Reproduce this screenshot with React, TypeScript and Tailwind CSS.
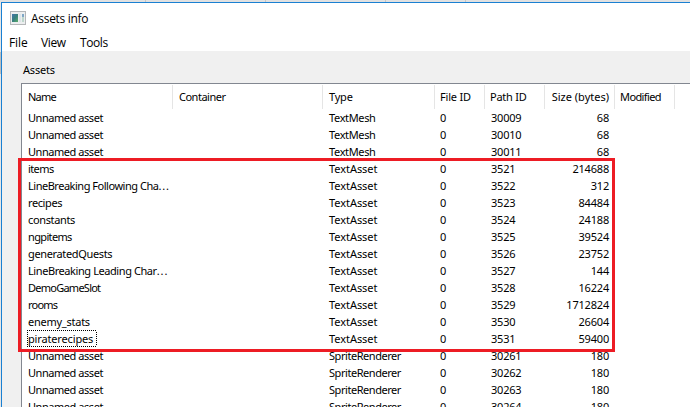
import React from "react";

type Asset = [name: string, type: string, pathId: string, size: string];

const assets: Asset[] = [
  ["Unnamed asset", "TextMesh", "30009", "68"],
  ["Unnamed asset", "TextMesh", "30010", "68"],
  ["Unnamed asset", "TextMesh", "30011", "68"],
  ["items", "TextAsset", "3521", "214688"],
  ["LineBreaking Following Cha...", "TextAsset", "3522", "312"],
  ["recipes", "TextAsset", "3523", "84484"],
  ["constants", "TextAsset", "3524", "24188"],
  ["ngpitems", "TextAsset", "3525", "39524"],
  ["generatedQuests", "TextAsset", "3526", "23752"],
  ["LineBreaking Leading Char...", "TextAsset", "3527", "144"],
  ["DemoGameSlot", "TextAsset", "3528", "16224"],
  ["rooms", "TextAsset", "3529", "1712824"],
  ["enemy_stats", "TextAsset", "3530", "26604"],
  ["piraterecipes", "TextAsset", "3531", "59400"],
  ["Unnamed asset", "SpriteRenderer", "30261", "180"],
  ["Unnamed asset", "SpriteRenderer", "30262", "180"],
  ["Unnamed asset", "SpriteRenderer", "30263", "180"],
  ["Unnamed asset", "SpriteRenderer", "30264", "180"],
];

const columns = "grid grid-cols-[151px_150px_112px_50px_60px_70px_60px]";

const nameTracking: Record<string, string> = {
  "Unnamed asset": "tracking-[-0.45px]",
  "LineBreaking Following Cha...": "tracking-[-0.48px]",
  "LineBreaking Leading Char...": "tracking-[-0.42px]",
  DemoGameSlot: "tracking-[-0.75px]",
  generatedQuests: "tracking-[-0.35px]",
  recipes: "tracking-[-0.4px]",
  rooms: "tracking-[-0.8px]",
  items: "tracking-[-0.6px]",
  ngpitems: "tracking-[-0.65px]",
  constants: "tracking-[-0.35px]",
  enemy_stats: "tracking-[-0.25px]",
};

const typeTracking: Record<string, string> = {
  TextMesh: "tracking-[-0.35px]",
  TextAsset: "tracking-[-0.05px]",
  SpriteRenderer: "tracking-[-0.45px]",
};

function WindowIcon() {
  return (
    <svg width="16" height="14" viewBox="0 0 16 14" shapeRendering="crispEdges">
      <defs>
        <linearGradient id="pane" x1="0" y1="0" x2="1" y2="1">
          <stop offset="0" stopColor="#4474ab" />
          <stop offset="0.5" stopColor="#37807e" />
          <stop offset="1" stopColor="#5cab68" />
        </linearGradient>
      </defs>
      <rect width="16" height="14" fill="#b4b6b8" />
      <rect x="1" y="1" width="14" height="12" fill="#eceeef" />
      <rect x="2" y="3" width="6" height="8" fill="url(#pane)" />
      <rect x="9" y="3" width="2" height="8" fill="#dce4e8" />
      <rect x="12" y="3" width="2" height="3" fill="#7fa6c6" />
      <rect x="12" y="6" width="2" height="5" fill="#bcd6cb" />
    </svg>
  );
}

function Row({ asset: [name, type, pathId, size] }: { asset: Asset }) {
  const focused = name === "piraterecipes";
  const truncated = name.endsWith("...");
  return (
    <div className={`${columns} h-[17px] leading-[17px]`}>
      <div className="flex pl-[6px]">
        <span className={`${focused ? "relative" : ""} ${nameTracking[name] ?? "tracking-[-0.15px]"}`}>
          {truncated ? name.slice(0, -3) : name}
          {truncated && <span className="tracking-[0.9px]">...</span>}
          {focused && (
            <svg className="absolute -left-px top-0" width="70" height="17" shapeRendering="crispEdges">
              <path d="M0 0.5H70M0 16.5H70M0.5 2V16M69.5 2V16" stroke="#000" strokeDasharray="1 1" />
            </svg>
          )}
        </span>
      </div>
      <div />
      <div className={`pl-[6px] ${typeTracking[type]}`}>{type}</div>
      <div className="pl-[5px]">0</div>
      <div className="pl-[6px]">{pathId}</div>
      <div className="pr-[6px] text-right">{size}</div>
      <div />
    </div>
  );
}

export default function App() {
  return (
    <div className="relative flex h-[407px] w-[690px] flex-col overflow-hidden bg-[#e1e1e1] font-['Noto_Sans',sans-serif] text-black">
      <div className="flex h-[2px] shrink-0">
        <div className="w-[146px] border-r border-[#c6c6c6]" />
        <div className="w-[120px] border-r border-[#c6c6c6]" />
        <div className="w-[120px] border-r border-[#c6c6c6]" />
        <div className="w-[80px] border-r border-[#c6c6c6]" />
      </div>
      <div className="flex min-h-0 flex-1">
        <div className="flex w-px shrink-0 flex-col">
          <div className="h-[50px] bg-[#e6e6e6]" />
          <div className="h-[22px] bg-[#bdbdbd]" />
          <div className="flex-1 bg-[#e6e6e6]" />
        </div>
        <div className="flex min-w-0 flex-1 flex-col border-l border-t border-[#1a80d2] bg-[#f0f0f0]">
          <header className="flex h-[32px] shrink-0 items-center bg-white pl-[8px]">
            <div className="pb-[3px]">
              <WindowIcon />
            </div>
            <h1 className="ml-[5px] whitespace-nowrap pb-px font-['Open_Sans',sans-serif] text-[12px] tracking-[-0.3px]">Assets info</h1>
          </header>
          <nav className="flex h-[16px] shrink-0 items-center bg-white pl-[7px] font-['Open_Sans',sans-serif] text-[12px] leading-[16px]">
            <span className="w-[32px] tracking-[-0.1px]">File</span>
            <span className="w-[39px] tracking-[-0.4px]">View</span>
            <span className="tracking-[-0.4px]">Tools</span>
          </nav>
          <main className="flex min-h-0 flex-1 flex-col pl-[19px] text-[11px] tracking-[-0.2px]">
            <div className="h-[32px] shrink-0 pl-[2px] pt-[11px] leading-[16px]">Assets</div>
            <div className="min-h-0 flex-1 overflow-hidden border-l border-t border-[#828790] bg-white">
              <div className={`${columns} mt-px h-[24px] leading-[24px] *:h-[24px] *:border-r *:border-[#e5e5e5] *:whitespace-nowrap`}>
                <div className="pl-[6px] tracking-[-0.8px]">Name</div>
                <div className="pl-[6px] tracking-[-0.5px]">Container</div>
                <div className="pl-[6px]">Type</div>
                <div className="pl-[5px]">File ID</div>
                <div className="pl-[5px] tracking-[-0.25px]">Path ID</div>
                <div className="pr-[5px] text-right tracking-[0]">Size (bytes)</div>
                <div className="pl-[5px] tracking-[-0.6px]">Modified</div>
              </div>
              {assets.map((asset) => (
                <Row key={asset[2]} asset={asset} />
              ))}
            </div>
          </main>
        </div>
      </div>
      <div className="pointer-events-none absolute left-[18px] top-[158px] h-[194px] w-[597px] border-[3px] border-[#ed1c24]" />
    </div>
  );
}
